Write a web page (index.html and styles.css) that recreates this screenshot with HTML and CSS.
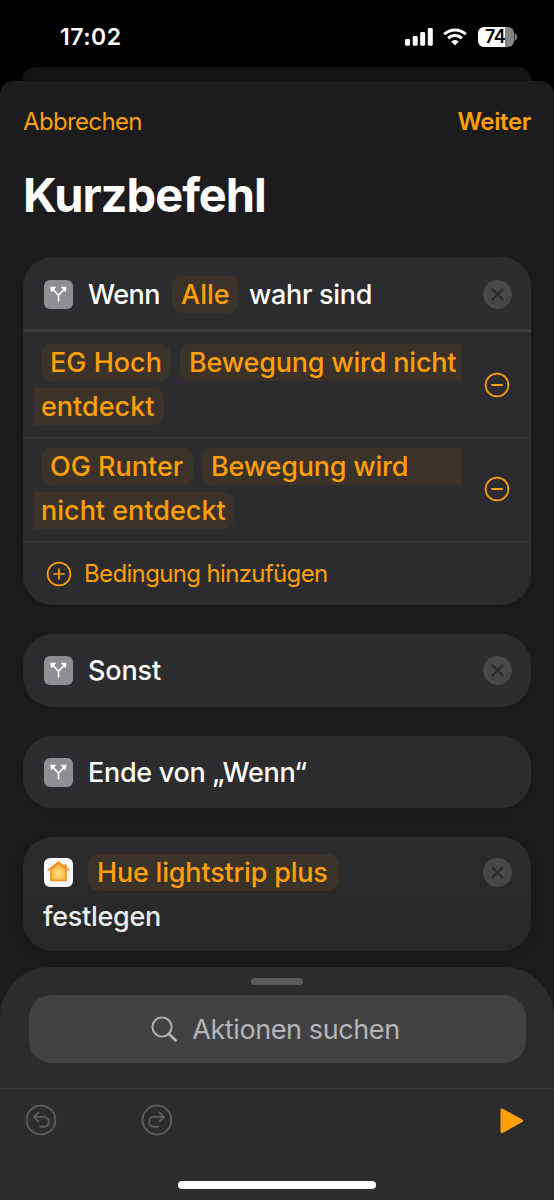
FILE: index.html
```html
<!DOCTYPE html>
<html lang="de">
<head>
<meta charset="utf-8">
<title>Kurzbefehl</title>
<link rel="stylesheet" href="styles.css">
</head>
<body>
<svg width="0" height="0" class="defs">
  <defs>
    <symbol id="branch" viewBox="0 0 29 29">
      <path d="M14.5 21.5V15.2M14.5 15.2L9 9.4M14.5 15.2L20 9.4" fill="none" stroke="#fff" stroke-width="1.6"/>
      <path d="M6.5 7.1h5.3l-4.5 4.8zM22.2 7.1H17l4.4 4.8z" fill="#fff" stroke="#fff" stroke-width=".6" stroke-linejoin="round"/>
    </symbol>
    <symbol id="close" viewBox="0 0 29 29">
      <circle cx="14.5" cy="14.5" r="14.4" fill="#48484a"/>
      <path d="M9.5 9.5l10 10M19.5 9.5l-10 10" stroke="#2b2b2d" stroke-width="2.3" stroke-linecap="round"/>
    </symbol>
    <symbol id="minus" viewBox="0 0 26 26">
      <circle cx="13" cy="13" r="11.4" fill="none" stroke="#ff9f0a" stroke-width="1.7"/>
      <path d="M8 13h10" stroke="#ff9f0a" stroke-width="1.8" stroke-linecap="round"/>
    </symbol>
    <radialGradient id="glow" cx=".5" cy=".6" r=".6">
      <stop offset="0" stop-color="#fbe083"/><stop offset="1" stop-color="#fbb33c"/>
    </radialGradient>
  </defs>
</svg>
<div class="screen">
  <header class="status">
    <span class="time">17:02</span>
    <div class="indicators">
      <svg class="signal" width="28" height="18" viewBox="0 0 28 18" fill="#fff"><rect x="0" y="11" width="5" height="6.7" rx="1.4"/><rect x="7.7" y="8" width="5" height="9.7" rx="1.4"/><rect x="15.2" y="4" width="5" height="13.7" rx="1.4"/><rect x="22.8" y="0" width="5" height="17.7" rx="1.4"/></svg>
      <svg class="wifi" width="24" height="18" viewBox="0 0 24 18"><g fill="none" stroke="#fff" stroke-width="3"><path d="M1.2 6.3a15.4 15.4 0 0 1 21.6 0"/><path d="M5.2 10.4a9.7 9.7 0 0 1 13.6 0"/></g><path d="M12 17.4l-3.7-3.8a5.3 5.3 0 0 1 7.4 0z" fill="#fff"/></svg>
      <div class="battery"><span>74</span></div>
      <svg width="3" height="8" viewBox="0 0 3 8"><path d="M.6 0v8A4.3 4.3 0 0 0 .6 0" fill="#7c7c7c"/></svg>
    </div>
  </header>
  <div class="sheet-behind"></div>
  <main class="sheet">
    <nav class="nav"><span class="cancel">Abbrechen</span><span class="next">Weiter</span></nav>
    <h1 class="title">Kurzbefehl</h1>
    <section class="card">
      <div class="card-head">
        <svg class="badge"><use href="#branch"/></svg>
        <span class="label wenn">Wenn</span>
        <span class="chip chip-all">Alle</span>
        <span class="label">wahr sind</span>
        <svg class="close"><use href="#close"/></svg>
      </div>
      <div class="condition first">
        <div class="parts">
          <div class="line"><span class="chip c-eg">EG Hoch</span><span class="chip opens c-move">Bewegung wird nicht</span></div>
          <div class="line"><span class="chip continues c-ent">entdeckt</span></div>
        </div>
        <svg class="minus"><use href="#minus"/></svg>
      </div>
      <div class="condition">
        <div class="parts">
          <div class="line"><span class="chip c-og">OG Runter</span><span class="chip opens c-wird">Bewegung wird</span></div>
          <div class="line"><span class="chip continues c-nicht">nicht entdeckt</span></div>
        </div>
        <svg class="minus"><use href="#minus"/></svg>
      </div>
      <div class="add">
        <svg width="26" height="26" viewBox="0 0 26 26" fill="none" stroke="#ff9f0a" stroke-width="1.7" stroke-linecap="round"><circle cx="13" cy="13" r="11.4"/><path d="M8 13h10M13 8v10"/></svg>
        <span>Bedingung hinzufügen</span>
      </div>
    </section>
    <section class="card single">
      <svg class="badge"><use href="#branch"/></svg>
      <span class="label sonst">Sonst</span>
      <svg class="close"><use href="#close"/></svg>
    </section>
    <section class="card single third">
      <svg class="badge"><use href="#branch"/></svg>
      <span class="label ende">Ende von „Wenn“</span>
    </section>
    <section class="card action">
      <div class="action-row">
        <svg class="home" viewBox="0 0 29 29"><path d="M7 11.4L14.5 5.4l7.5 6v10.9H7z" fill="url(#glow)" stroke="#f7941f" stroke-width="1.8"/><path d="M4.2 12L14.5 4.1 24.8 12" fill="none" stroke="#f18a20" stroke-width="1.5" stroke-linecap="round"/><path d="M20.4 6.2h2.2v4.6l-2.2-1.8z" fill="#f18a20"/></svg>
        <span class="chip c-hue">Hue lightstrip plus</span>
        <svg class="close"><use href="#close"/></svg>
      </div>
      <span class="label set">festlegen</span>
    </section>
  </main>
  <footer class="drawer">
    <div class="grip"></div>
    <div class="search">
      <svg width="27" height="27" viewBox="0 0 27 27" fill="none" stroke="#b5b5b7" stroke-linecap="round"><circle cx="11" cy="11" r="9.6" stroke-width="1.9"/><path d="M18 18l6.6 6.4" stroke-width="2.7"/></svg>
      <span>Aktionen suchen</span>
    </div>
    <div class="toolbar">
      <svg class="undo" width="32" height="32" viewBox="0 0 32 32" fill="none" stroke="#5e5e5f" stroke-width="1.9" stroke-linecap="round" stroke-linejoin="round"><circle cx="16" cy="16" r="14.4"/><path d="M13.3 8.6L8.8 12.9l4.5 4.4M9 12.9h10a4.9 4.9 0 0 1 0 9.8h-4"/></svg>
      <svg class="redo" width="32" height="32" viewBox="0 0 32 32" fill="none" stroke="#5e5e5f" stroke-width="1.9" stroke-linecap="round" stroke-linejoin="round"><circle cx="16" cy="16" r="14.4"/><path d="M18.7 8.6l4.5 4.3-4.5 4.4M23 12.9H13a4.9 4.9 0 0 0 0 9.8h4"/></svg>
      <svg class="play" width="24" height="26" viewBox="0 0 24 26"><path d="M2 2v21.6L21.6 12.8z" fill="#ff9f0a" stroke="#ff9f0a" stroke-width="3" stroke-linejoin="round"/></svg>
    </div>
    <div class="home-bar"></div>
  </footer>
</div>
</body>
</html>
```
FILE: styles.css
```css
* { box-sizing: border-box; }
body { margin: 0; background: #000; font-family: Inter, "Liberation Sans", sans-serif; }
svg { display: block; flex: none; }
.defs { position: absolute; }
.screen { width: 554px; height: 1200px; overflow: hidden; position: relative; background: #000; color: #fff; display: flex; flex-direction: column; }

.status { height: 67px; flex: none; display: flex; justify-content: space-between; padding: 27px 37px 0 60px; }
.time { font-size: 23px; font-weight: 600; line-height: 20px; letter-spacing: .5px; }
.indicators { display: flex; height: 20px; align-items: center; }
.signal { margin-right: 10px; }
.wifi { margin-right: 11px; }
.battery { width: 36px; height: 20px; border-radius: 6px; background: linear-gradient(90deg, #fff 0 27px, #868686 27px); color: #000; font-size: 18px; font-weight: 600; line-height: 20px; padding-left: 7px; letter-spacing: -.5px; }

.sheet-behind { flex: none; height: 14px; margin: 0 23px; background: #141414; border-radius: 12px 12px 0 0; }
.sheet { flex: none; height: 1119px; background: #1c1c1e; border-radius: 14px 14px 0 0; padding: 0 23px; display: flex; flex-direction: column; }
.nav { height: 80px; flex: none; display: flex; justify-content: space-between; align-items: center; color: #ff9f0a; font-size: 24px; letter-spacing: -.65px; }
.next { font-weight: 600; letter-spacing: -.35px; }
.title { margin: 0; height: 96px; flex: none; font-size: 47px; line-height: 68px; font-weight: 700; letter-spacing: -1px; }

.card { flex: none; background: #2c2c2e; border-radius: 30px; box-shadow: 0 4px 12px rgba(0, 0, 0, .12); margin-bottom: 29px; font-size: 27px; font-weight: 500; white-space: nowrap; }
.card-head { height: 75px; display: flex; align-items: center; padding: 2px 19px 0 21px; border-bottom: 3px solid #3f3f41; }
.badge { width: 29px; height: 29px; border-radius: 6px; background: #8e8e93; margin-right: 15px; }
.close { width: 29px; height: 29px; margin-left: auto; }
.label { letter-spacing: -.3px; }
.chip { display: flex; align-items: center; height: 37px; padding: 0 9px; border-radius: 10px; background: #3b332a; color: #ff9f0a; }
.wenn { width: 84px; letter-spacing: -.5px; }
.chip-all { width: 66px; margin-right: 11px; }

.condition { height: 104px; display: flex; padding: 10px 21px 0 11px; border-bottom: 1px solid #39393b; }
.condition.first { height: 106px; padding-top: 12px; }
.parts { width: 427px; display: flex; flex-direction: column; gap: 7px; }
.line { display: flex; }
.c-eg { margin-left: 7px; width: 130px; }
.opens { border-radius: 10px 0 0 10px; margin-left: 9px; letter-spacing: -.2px; }
.c-move { width: 281px; }
.c-og { margin-left: 7px; width: 152px; }
.c-wird { width: 259px; }
.continues { border-radius: 0 10px 10px 0; padding-left: 7px; }
.c-ent { width: 130px; }
.c-nicht { width: 200px; }
.minus { width: 26px; height: 26px; margin: 28px 0 0 auto; }
.add { height: 63px; display: flex; align-items: center; gap: 12px; padding-left: 23px; color: #ff9f0a; font-size: 24px; font-weight: 400; letter-spacing: -.65px; }

.single { height: 73px; display: flex; align-items: center; padding: 0 19px 0 21px; }
.sonst { letter-spacing: -.15px; }
.third { height: 72px; }
.action { height: 114px; padding: 17px 19px 0 21px; background: linear-gradient(#2c2c2e, #272728); display: flex; flex-direction: column; gap: 7px; box-shadow: 0 4px 20px 8px rgba(0, 0, 0, .12); }
.action-row { display: flex; align-items: center; height: 37px; }
.home { width: 29px; height: 29px; background: #f8f8f8; border-radius: 6px; margin-right: 15px; }
.c-hue { width: 251px; letter-spacing: -.2px; }
.set { line-height: 37px; color: #ededed; margin-left: -1px; }

/* The action drawer covers the lower end of the scrolling sheet. */
.drawer { position: absolute; left: 0; top: 967px; width: 554px; height: 233px; background: #2c2c2c; border-radius: 50px 50px 0 0; display: flex; flex-direction: column; align-items: center; padding-top: 11px; }
.grip { width: 52px; height: 7px; border-radius: 4px; background: #5a5a5b; }
.search { width: 497px; height: 68px; margin: 10px 0 25px; border-radius: 22px; background: #424244; display: flex; align-items: center; justify-content: center; gap: 14px; padding-right: 3px; font-size: 27px; letter-spacing: -.4px; color: #b5b5b7; }
.toolbar { width: 554px; height: 93px; border-top: 1px solid #3a3a3a; display: flex; padding: 15px 30px 0 25px; }
.redo { margin-left: 84px; }
.play { margin: 4px 0 0 auto; }
.home-bar { width: 198px; height: 8px; border-radius: 4px; background: #fff; }
```
